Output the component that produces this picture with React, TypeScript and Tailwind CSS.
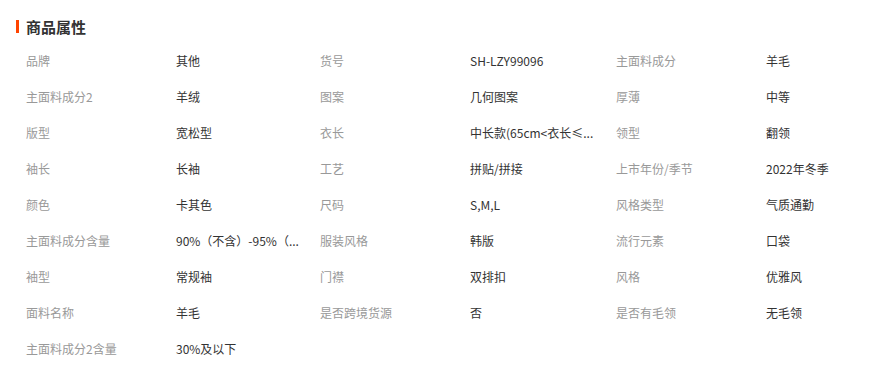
const attrs: [string, string][] = [
  ["品牌", "其他"],
  ["货号", "SH-LZY99096"],
  ["主面料成分", "羊毛"],
  ["主面料成分2", "羊绒"],
  ["图案", "几何图案"],
  ["厚薄", "中等"],
  ["版型", "宽松型"],
  ["衣长", "中长款(65cm<衣长≤..."],
  ["领型", "翻领"],
  ["袖长", "长袖"],
  ["工艺", "拼贴/拼接"],
  ["上市年份/季节", "2022年冬季"],
  ["颜色", "卡其色"],
  ["尺码", "S,M,L"],
  ["风格类型", "气质通勤"],
  ["主面料成分含量", "90%（不含）-95%（..."],
  ["服装风格", "韩版"],
  ["流行元素", "口袋"],
  ["袖型", "常规袖"],
  ["门襟", "双排扣"],
  ["风格", "优雅风"],
  ["面料名称", "羊毛"],
  ["是否跨境货源", "否"],
  ["是否有毛领", "无毛领"],
  ["主面料成分2含量", "30%及以下"],
];

export default function App() {
  return (
    <div
      className="w-[896px] h-[370px] bg-white overflow-hidden"
      style={{ fontFamily: '"Microsoft YaHei", "Noto Sans CJK SC", sans-serif' }}
    >
      <div className="flex items-center pl-4 pt-[13px] h-[43px] pb-[4px]">
        <span className="w-[3px] h-[13px] bg-[#ff4400]" />
        <h2 className="ml-[7px] text-[15px] font-bold text-[#333] leading-none">商品属性</h2>
      </div>
      <div className="grid grid-cols-[294px_296px_280px] pl-[26px]">
        {attrs.map(([label, value]) => (
          <div key={label} className="flex items-center h-9 text-[12px]">
            <span className="w-[150px] shrink-0 text-[#999] whitespace-nowrap">{label}</span>
            <span className="whitespace-nowrap text-[#333]">{value}</span>
          </div>
        ))}
      </div>
    </div>
  );
}
